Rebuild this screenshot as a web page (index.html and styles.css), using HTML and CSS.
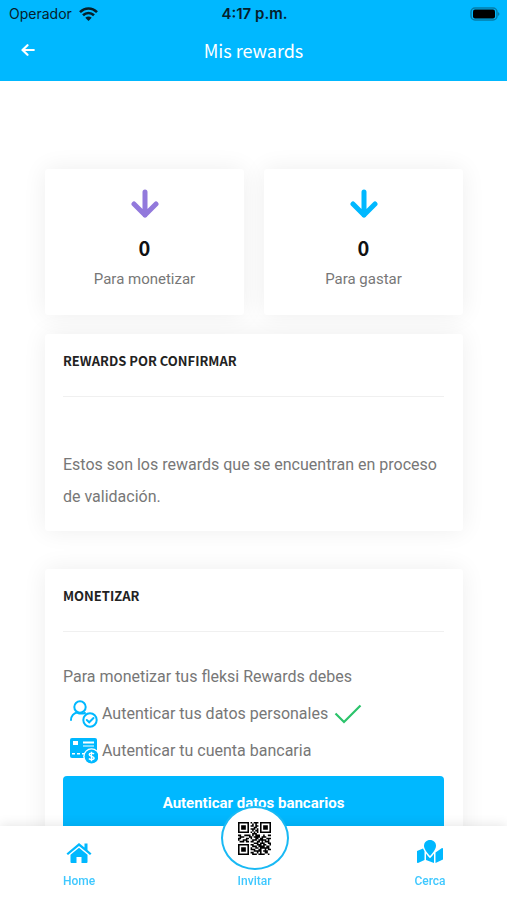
FILE: index.html
```html
<!DOCTYPE html>
<html lang="es">
<head>
    <meta charset="UTF-8">
    <meta name="viewport" content="width=device-width, initial-scale=1.0">
    <title>Mis rewards</title>
    <link rel="stylesheet" href="styles.css">
</head>
<body>
    <header class="header">
        <div class="status-bar">
            <span class="carrier">Operador
                <svg width="19" height="14" viewBox="0 0 19 14" fill="none" stroke="#06202b" stroke-width="2.6">
                    <path d="M1 5.2C6 .2 13 .2 18 5.2M4 8.3c3.2-3 7.800-3 11 0"/>
                    <path d="M9.500 14L6.300 10.800c1.800-1.700 4.600-1.700 6.400 0z" fill="#06202b" stroke="none"/>
                </svg>
            </span>
            <span class="time">4:17 p.m.</span>
            <svg class="battery" width="30" height="14" viewBox="0 0 30 14">
                <rect x="1" y="1" width="26" height="12" rx="4" fill="none" stroke="#057ca9" stroke-width="1.500"/>
                <rect x="3" y="2.500" width="22" height="9" rx="2" fill="#000"/>
                <path d="M28 5v4c2-1 2-3 0-4z" fill="#057ca9"/>
            </svg>
        </div>
        <div class="title-bar">
            <a href="#" class="back" aria-label="Volver">
                <svg width="14" height="12" viewBox="0 0 14 12" fill="none" stroke="#fff" stroke-width="2.200" stroke-linecap="round" stroke-linejoin="round">
                    <path d="M6.500 1.200L1.500 6l5 4.800M2 6h10.800"/>
                </svg>
            </a>
            <h1>Mis rewards</h1>
        </div>
    </header>

    <main class="container">
        <div class="totals">
            <div class="card total">
                <svg class="purple" width="28" height="30" viewBox="0 0 28 30">
                    <path d="M14 3v23M3 15l11 11 11-11"/>
                </svg>
                <strong>0</strong>
                <span>Para monetizar</span>
            </div>
            <div class="card total">
                <svg class="blue" width="28" height="30" viewBox="0 0 28 30">
                    <path d="M14 3v23M3 15l11 11 11-11"/>
                </svg>
                <strong>0</strong>
                <span>Para gastar</span>
            </div>
        </div>

        <section class="card pending">
            <h2>REWARDS POR CONFIRMAR</h2>
            <p>Estos son los rewards que se encuentran en proceso de validación.</p>
        </section>

        <section class="card monetize">
            <h2>MONETIZAR</h2>
            <p>Para monetizar tus fleksi Rewards debes</p>
            <ul>
                <li>
                    <svg width="28" height="28" viewBox="0 0 28 28" fill="none" stroke="#00b8ff" stroke-width="2" stroke-linecap="round">
                        <circle cx="10" cy="7" r="5.700"/>
                        <path d="M1 20c0-4 3-7 6-7.500 2 1 5 1.500 8 .5"/>
                        <circle cx="20" cy="20" r="6.700"/>
                        <path d="M16.800 20l2.400 2.300 4.300-4.300"/>
                    </svg>
                    <span>Autenticar tus datos personales</span>
                    <svg class="check" width="28" height="20" viewBox="0 0 28 20" fill="none" stroke="#2bc36b" stroke-width="2.200">
                        <path d="M1.500 9.500l8.500 8.500L26.500 1.500"/>
                    </svg>
                </li>
                <li>
                    <svg width="28" height="28" viewBox="0 0 28 28">
                        <rect y="1" width="27" height="20" rx="2" fill="#00b8ff"/>
                        <path d="M3 4h5v4H3zM13 4.500h11v2H13zM13 8.500h11v1H13zM2 16h3v1.500H2zM7 16h3v1.500H7zM12 16h3v1.500h-3z" fill="#fff"/>
                        <circle cx="21.500" cy="19.500" r="8.300" fill="#fff"/>
                        <circle cx="21.500" cy="19.500" r="6.900" fill="#00b8ff"/>
                        <path d="M24 17c-1-1.200-4.800-1.200-4.800.6 0 2.300 4.900 1.200 4.900 3.500 0 1.900-4 2-5.200.4M21.500 14.800v9.400" fill="none" stroke="#fff" stroke-width="1.400"/>
                    </svg>
                    <span>Autenticar tu cuenta bancaria</span>
                </li>
            </ul>
            <button type="button">Autenticar datos bancarios</button>
        </section>
    </main>

    <nav class="bottom-nav">
        <a href="#">
            <svg width="26" height="22" viewBox="0 0 26 22" fill="#00b8ff">
                <path d="M13 1L.5 11.500 2 13 13 4l11 9 1.500-1.500L21.500 8V1.500h-3v4z"/>
                <path d="M13 5.800L4.500 12.800V20q0 1 1 1h5v-6h5v6h5q1 0 1-1v-7.200z"/>
            </svg>
            <span>Home</span>
        </a>
        <a href="#">
            <span class="qr">
                <svg width="33" height="33" viewBox="0 0 21 21">
                    <!-- corner finders -->
                    <path d="M.5.5h6v6h-6zM14.500.5h6v6h-6zM.5 14.500h6v6h-6z" fill="none" stroke="#000"/>
                    <path d="M2 2h3v3H2zM16 2h3v3h-3zM2 16h3v3H2z"/>
                    <!-- data modules -->
                    <path d="M8 .5h1M10 .5h3M9 1.500h1M11 1.500h1M8 2.500h2M11 2.500h2M10 3.500h2M8 4.500h3M12 4.500h1M9 5.500h1M11 5.500h2M8 6.500h1M10 6.500h1M12 6.500h1M9 7.500h3M0 8.500h2M4 8.500h4M9 8.500h1M11 8.500h3M16 8.500h1M19 8.500h2M1 9.500h3M7 9.500h2M10 9.500h4M15 9.500h3M0 10.500h2M5 10.500h2M8 10.500h1M11 10.500h2M14 10.500h2M18 10.500h3M0 11.500h1M3 11.500h3M9 11.500h3M13 11.500h5M19 11.500h1M1 12.500h3M5 12.500h2M8 12.500h2M12 12.500h2M15 12.500h1M17 12.500h3M10 13.500h3M14 13.500h3M19 13.500h2M8 14.500h2M12 14.500h3M16 14.500h2M20 14.500h1M9 15.500h3M13 15.500h4M18 15.500h2M8 16.500h1M11 16.500h2M14 16.500h6M8 17.500h3M13 17.500h2M17 17.500h1M19 17.500h2M10 18.500h5M16 18.500h3M8 19.500h2M12 19.500h1M14 19.500h1M17 19.500h2M9 20.500h3M13 20.500h4M19 20.500h1" stroke="#000"/>
                </svg>
            </span>
            <span>Invitar</span>
        </a>
        <a href="#">
            <svg width="26" height="24" viewBox="0 0 26 24" fill="#00b8ff">
                <path d="M13 0c-3.500 0-6 2.500-6 6 0 3.200 4.500 8.500 6 10 1.500-1.500 6-6.800 6-10 0-3.500-2.500-6-6-6z"/>
                <path d="M0 11l6-2.500 1.500 2.800V20L1 23q-1 .3-1-1zM9 13.500q2 3 4 4.800 2-1.800 4-4.800V23l-8-3zM18.500 12.500L25 8q1-.3 1 1v10.500L18.500 23z"/>
            </svg>
            <span>Cerca</span>
        </a>
    </nav>
</body>
</html>
```
FILE: styles.css
```css
* { box-sizing: border-box; }
body {
    font-family: Roboto, sans-serif;
    background-color: #fff;
    color: #777;
    margin: 0;
    padding-bottom: 76px;
}

.header {
    background-color: #00b8ff;
    height: 81px;
}
.status-bar {
    display: grid;
    grid-template-columns: 1fr auto 1fr;
    align-items: center;
    height: 27px;
    padding: 0 7px 0 9px;
    font-family: Inter, sans-serif;
    font-size: 14px;
    color: #06202b;
}
.carrier { display: flex; align-items: center; gap: 7px; }
.time { font-size: 15px; font-weight: 600; }
.battery { justify-self: end; }
.title-bar {
    display: grid;
    grid-template-columns: 1fr auto 1fr;
    align-items: center;
    height: 46px;
    padding: 0 21px;
}
.back { display: flex; }
h1 {
    margin: 0;
    font-family: "Noto Sans CJK JP", sans-serif;
    font-size: 18px;
    font-weight: 400;
    line-height: 24px;
    color: #fff;
}

.container { padding: 88px 44px 0 45px; }
.card {
    background-color: #fff;
    border-radius: 3px;
    box-shadow: 0 0 24px rgba(0, 0, 0, 0.07);
}
.totals {
    display: grid;
    grid-template-columns: 1fr 1fr;
    gap: 20px;
}
.total {
    display: flex;
    flex-direction: column;
    align-items: center;
    padding: 20px 10px 22px;
    font-size: 15px;
}
.total svg { fill: none; stroke-width: 5; stroke-linecap: round; stroke-linejoin: round; }
.purple { stroke: #9279dc; }
.blue { stroke: #00b8ff; }
.total strong {
    margin-top: 12px;
    font-family: "Noto Sans CJK JP", sans-serif;
    font-size: 20px;
    line-height: 34px;
    color: #111;
}
.total span { line-height: 28px; }

section { padding: 15px 19px 18px 18px; }
h2 {
    margin: 0;
    padding-bottom: 23px;
    border-bottom: 1px solid #f0f0f0;
    font-family: "Noto Sans CJK JP", sans-serif;
    font-size: 13px;
    line-height: 24px;
    color: #222;
}
p { margin: 0; font-size: 16px; line-height: 32px; }
.pending { margin-top: 19px; }
.pending p { padding-top: 52px; }
.monetize { margin-top: 38px; }
.monetize p { padding-top: 29px; }
ul { list-style: none; margin: 2px 0 0; padding: 0 0 0 7px; }
li {
    display: flex;
    align-items: center;
    gap: 4px;
    height: 37px;
    font-size: 16px;
}
.check { margin-left: 2px; }
button {
    width: 100%;
    height: 54px;
    margin-top: 7px;
    border: none;
    border-radius: 4px;
    background-color: #00b8ff;
    color: #fff;
    font-family: Roboto, sans-serif;
    font-size: 15px;
    font-weight: 700;
    cursor: pointer;
}

.bottom-nav {
    position: fixed;
    left: 0;
    right: 0;
    bottom: 0;
    display: flex;
    justify-content: space-between;
    height: 74px;
    padding: 0 39px 0 41px;
    background-color: #fff;
    box-shadow: 0 0 12px rgba(0, 0, 0, 0.12);
}
.bottom-nav a {
    position: relative;
    display: flex;
    flex-direction: column;
    align-items: center;
    justify-content: flex-end;
    gap: 8px;
    width: 76px;
    padding-bottom: 10px;
    color: #3fc8ff;
    font-size: 12px;
    font-weight: 500;
    line-height: 18px;
    text-decoration: none;
}
/* round button sticks out over the bar */
.qr {
    position: absolute;
    top: -20px;
    display: flex;
    align-items: center;
    justify-content: center;
    width: 68px;
    height: 64px;
    border: 2px solid #19b9f4;
    border-radius: 50%;
    background-color: #fff;
}
```
